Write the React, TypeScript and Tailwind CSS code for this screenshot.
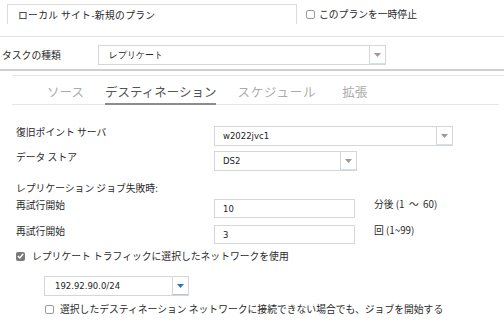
import React from "react";

function Arrow({ blue = false }: { blue?: boolean }) {
  return (
    <svg width="7" height="4" viewBox="0 0 7 4">
      <polygon points="0,0 7,0 3.5,4" fill={blue ? "#2f73c9" : "#9a9a9a"} />
    </svg>
  );
}

function Select({
  value,
  w,
  blue = false,
  pad = "pl-[8px]",
}: {
  value: string;
  w: string;
  blue?: boolean;
  pad?: string;
}) {
  return (
    <div className={`${w} h-[20px] flex border border-[#d6d6d6] bg-white`}>
      <div className={`flex-1 flex items-center ${pad} text-[8.5px] font-['DejaVu_Sans',sans-serif] text-[#222]`}>
        {value}
      </div>
      <div
        className={
          blue
            ? "w-[16px] flex items-center justify-center border-l border-[#d6d6d6] border-b border-b-[#a9c6ea]"
            : "w-[16px] flex items-center justify-center border-l border-[#d6d6d6] border-b border-b-[#cfe0f3]"
        }
      >
        <Arrow blue={blue} />
      </div>
    </div>
  );
}

function Input({ value }: { value: string }) {
  return (
    <div className="w-[141px] h-[19px] flex items-center pl-[8px] border border-[#d6d6d6] bg-white text-[8.5px] font-['DejaVu_Sans',sans-serif] text-[#222]">
      {value}
    </div>
  );
}

function Box({ checked = false }: { checked?: boolean }) {
  if (checked) {
    return (
      <div className="w-[9px] h-[9px] rounded-[2px] bg-[#7a7a7a] flex items-center justify-center shrink-0">
        <svg width="7" height="6" viewBox="0 0 7 6">
          <polyline points="0.8,3 2.8,5 6.2,0.8" fill="none" stroke="#fff" strokeWidth="1.4" />
        </svg>
      </div>
    );
  }
  return <div className="w-[9px] h-[9px] rounded-[2px] border border-[#9a9a9a] bg-white shrink-0" />;
}

export default function App() {
  return (
    <div className="w-[504px] h-[333px] bg-white overflow-hidden font-['Noto_Sans_CJK_JP','Noto_Sans',sans-serif] text-[9.8px] leading-[10px] text-[#2a2a2a]">
      {/* top row */}
      <div className="flex items-center pt-[4px] pl-[7px]">
        <div className="w-[290px] h-[20px] border-t border-l border-r border-[#dcdcdc] flex items-center pl-[10px] tracking-[0.3px]">
          ローカル サイト-新規のプラン
        </div>
        <div className="flex items-center ml-[9px]">
          <Box />
          <span className="ml-[4px]">このプランを一時停止</span>
        </div>
      </div>
      <div className="mt-[12px] h-px bg-[#e3e3e3]" />

      {/* task type */}
      <div className="flex items-center mt-[8px]">
        <div className="w-[98px] pl-[2px]">タスクの種類</div>
        <Select value="レプリケート" w="w-[288px]" pad="pl-[10px]" />
      </div>
      <div className="mt-[4px] h-[2px] bg-[#d0d0d0]" />
      <div className="ml-[12px] mt-[4px] h-px bg-[#e6e6e6]" />

      {/* tabs */}
      <div className="ml-[12px] mr-[5px] flex border-b border-[#e6e6e6] text-[12.5px] leading-[14px] text-[#ababab]">
        <div className="ml-[35px] pt-[9px] pb-[5px]">ソース</div>
        <div className="ml-[21px] pt-[9px] pb-[4px] text-[#555] border-b-2 border-[#8c8c8c] -mb-px">
          デスティネーション
        </div>
        <div className="ml-[21px] pt-[9px] pb-[5px] tracking-[0.8px]">スケジュール</div>
        <div className="ml-[26px] pt-[9px] pb-[5px]">拡張</div>
      </div>

      {/* form */}
      <div className="flex items-start mt-[21px]">
        <div className="w-[214px] pl-[16px] pt-[1px]">復旧ポイント サーバ</div>
        <Select value="w2022jvc1" w="w-[239px]" />
      </div>
      <div className="flex items-start mt-[5px]">
        <div className="w-[214px] pl-[16px] pt-[1px]">データ ストア</div>
        <Select value="DS2" w="w-[143px]" />
      </div>
      <div className="pl-[16px] mt-[12px]">レプリケーション ジョブ失敗時:</div>
      <div className="flex items-start mt-[6px]">
        <div className="w-[214px] pl-[16px] pt-[1px]">再試行開始</div>
        <Input value="10" />
        <div className="ml-[19px] pt-[0px] whitespace-pre">分後 (1  ～  60)</div>
      </div>
      <div className="flex items-start mt-[7px]">
        <div className="w-[214px] pl-[16px] pt-[1px]">再試行開始</div>
        <Input value="3" />
        <div className="ml-[19px] pt-[0px]">回 (1~99)</div>
      </div>
      <div className="flex items-center mt-[7px] pl-[16px]">
        <Box checked />
        <span className="ml-[7px]">レプリケート トラフィックに選択したネットワークを使用</span>
      </div>
      <div className="mt-[15px] pl-[44px]">
        <Select value="192.92.90.0/24" w="w-[145px]" blue pad="pl-[10px]" />
      </div>
      <div className="flex items-center mt-[8px] pl-[45px]">
        <Box />
        <span className="ml-[6px]">
          選択したデスティネーション ネットワークに接続できない場合でも、ジョブを開始する
        </span>
      </div>
    </div>
  );
}
